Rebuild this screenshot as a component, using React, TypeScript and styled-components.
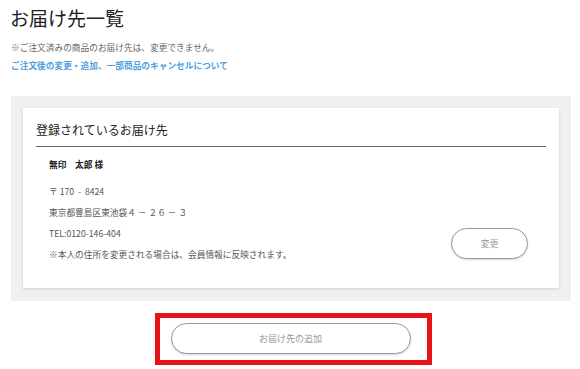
import styled, { createGlobalStyle } from "styled-components";

const GlobalStyle = createGlobalStyle`
  body {
    margin: 0;
    background: #fff;
    font-family: "Noto Sans CJK JP", "Noto Sans", sans-serif;
    color: #333;
  }
`;

const Page = styled.div`
  width: 580px;
  padding: 0 9px 0 11px;
  box-sizing: border-box;
`;

const Title = styled.h1`
  margin: 0 0 0 -1px;
  padding-top: 4px;
  font-size: 19px;
  font-weight: 400;
  line-height: 28px;
  color: #222;
`;

const Notice = styled.p`
  margin: 10px 0 0;
  font-size: 8.7px;
  line-height: 12px;
  color: #666;
`;

const HelpLink = styled.a`
  display: block;
  margin-top: 6px;
  font-size: 8.7px;
  line-height: 12px;
  font-weight: 700;
  color: #4f9fe2;
  text-decoration: none;
`;

const Panel = styled.section`
  margin-top: 24px;
  background: #f0f0f0;
  padding: 12px 12px 13px;
`;

const Card = styled.div`
  background: #fff;
  box-shadow: 0 1px 3px rgba(0, 0, 0, 0.12);
  padding: 12px 13px 27px 10px;
`;

const CardTitle = styled.h2`
  margin: 0 0 0 3px;
  font-size: 12px;
  font-weight: 400;
  line-height: 20px;
  color: #222;
  padding-bottom: 6px;
  border-bottom: 1px solid #666;
`;

const Body = styled.div`
  display: flex;
  align-items: flex-end;
  justify-content: space-between;
  padding: 12px 18px 0 16px;
`;

const Info = styled.div`
  display: flex;
  flex-direction: column;
`;

const Line = styled.p<{ $bold?: boolean; $gap?: number }>`
  margin: ${(p) => p.$gap ?? 9}px 0 0;
  font-size: 8.7px;
  line-height: 12px;
  color: ${(p) => (p.$bold ? "#222" : "#555")};
  font-weight: ${(p) => (p.$bold ? 700 : 400)};
  white-space: pre;
`;

const PillButton = styled.button<{ $w: number; $h: number }>`
  width: ${(p) => p.$w}px;
  height: ${(p) => p.$h}px;
  border: 1px solid #999;
  border-radius: 999px;
  background: #fff;
  color: #999;
  font-family: inherit;
  font-size: 9px;
  cursor: pointer;
  box-shadow: 0 1px 2px rgba(0, 0, 0, 0.15);
`;

const ChangeWrap = styled.div`
  margin-bottom: 2px;
`;

const Footer = styled.div`
  display: flex;
  justify-content: center;
  margin-top: 12px;
  margin-left: 4px;
`;

const Highlight = styled.div`
  border: 5px solid #e8141b;
  padding: 5px 16px 6px 11px;
`;

export default function App() {
  return (
    <>
      <GlobalStyle />
      <Page>
        <Title>お届け先一覧</Title>
        <Notice>※ご注文済みの商品のお届け先は、変更できません。</Notice>
        <HelpLink href="#">ご注文後の変更・追加、一部商品のキャンセルについて</HelpLink>
        <Panel>
          <Card>
            <CardTitle>登録されているお届け先</CardTitle>
            <Body>
              <Info>
                <Line $bold $gap={0}>
                  {"無印　太郎 様"}
                </Line>
                <Line $gap={15}>{"〒 170  -  8424"}</Line>
                <Line>東京都豊島区東池袋４ － ２６ － ３</Line>
                <Line>TEL:0120-146-404</Line>
                <Line>※本人の住所を変更される場合は、会員情報に反映されます。</Line>
              </Info>
              <ChangeWrap>
                <PillButton $w={77} $h={31}>変更</PillButton>
              </ChangeWrap>
            </Body>
          </Card>
        </Panel>
        <Footer>
          <Highlight>
            <PillButton $w={240} $h={31}>お届け先の追加</PillButton>
          </Highlight>
        </Footer>
      </Page>
    </>
  );
}
